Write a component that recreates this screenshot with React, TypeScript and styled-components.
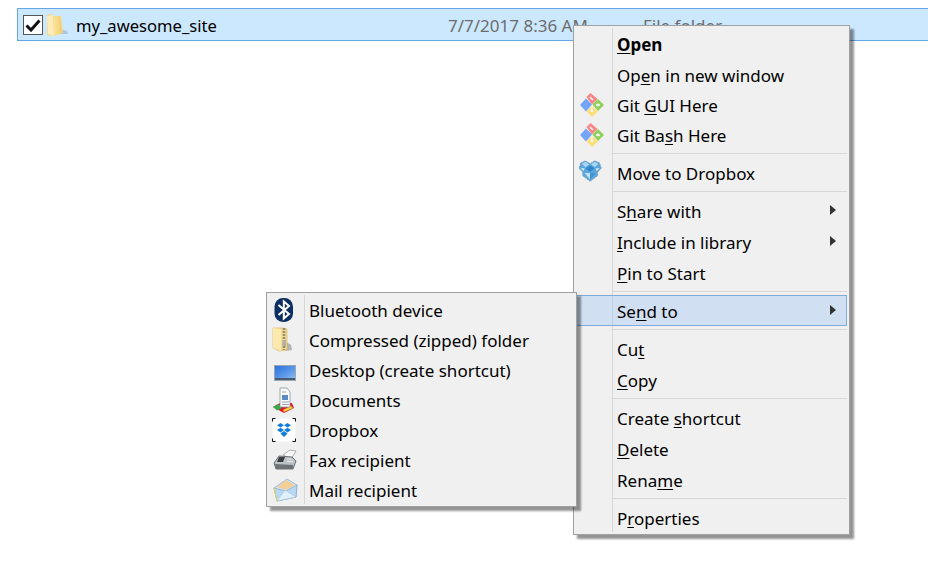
import React from 'react';
import styled, { createGlobalStyle } from 'styled-components';

const GlobalStyle = createGlobalStyle`
  html, body {
    margin: 0;
    padding: 0;
    background: #fff;
    overflow: hidden;
  }
  body {
    font-family: "Noto Sans", "Open Sans", "Liberation Sans", sans-serif;
    color: #000;
  }
`;

const Page = styled.div`
  position: relative;
  width: 928px;
  height: 568px;
  overflow: hidden;
  padding: 8px 0 0 17px;
  box-sizing: border-box;
`;

const FileRow = styled.div`
  display: flex;
  align-items: center;
  width: 930px;
  height: 33px;
  box-sizing: border-box;
  background: #cce8ff;
  border: 1px solid #66a7e8;
  padding-left: 5px;
  font-size: 17px;
`;

const CheckBox = styled.div`
  display: flex;
  align-items: center;
  justify-content: center;
  width: 20px;
  height: 20px;
  box-sizing: border-box;
  border: 1px solid #555;
  background: #fff;
  margin-right: 3px;
`;

const FileName = styled.span`
  margin-left: 6px;
  padding-top: 1px;
  width: 372px;
  font-size: 16.6px;
`;

const FileMeta = styled.span<{ $width: number }>`
  width: ${(p) => p.$width}px;
  padding-top: 1px;
  color: #6d6d6d;
  white-space: nowrap;
`;

const Menu = styled.div<{ $left: number; $top: number; $width: number; $gutter: number; $layer: number }>`
  position: absolute;
  left: ${(p) => p.$left}px;
  top: ${(p) => p.$top}px;
  width: ${(p) => p.$width}px;
  z-index: ${(p) => p.$layer};
  box-sizing: border-box;
  display: flex;
  flex-direction: column;
  padding: 2px 2px 1px;
  background: #f0f0f0;
  border: 1px solid #a0a0a0;
  box-shadow: 4px 4px 2px rgba(0, 0, 0, 0.42);

  &::before {
    content: '';
    position: absolute;
    left: ${(p) => p.$gutter}px;
    top: 2px;
    bottom: 2px;
    width: 1px;
    background: #d7d7d7;
  }
`;

const Row = styled.div<{ $height: number; $active?: boolean; $inset: number }>`
  position: relative;
  display: flex;
  align-items: center;
  height: ${(p) => p.$height}px;
  box-sizing: border-box;
  padding: 1px 0 0 ${(p) => p.$inset}px;
  font-size: 17px;
  white-space: nowrap;
  background: ${(p) => (p.$active ? 'rgba(160, 197, 245, 0.4)' : 'transparent')};
  outline: ${(p) => (p.$active ? '1px solid #7fabdc' : 'none')};
  outline-offset: -1px;
  u {
    text-underline-offset: 2px;
  }
`;

const Label = styled.span<{ $bold?: boolean }>`
  font-weight: ${(p) => (p.$bold ? 700 : 400)};
`;

const IconSlot = styled.span<{ $center: number }>`
  position: absolute;
  left: ${(p) => p.$center - 13}px;
  top: 50%;
  margin-top: -14px;
  width: 26px;
  height: 26px;
  display: flex;
  svg {
    overflow: visible;
  }
`;

const Arrow = styled.span`
  position: absolute;
  right: 11px;
  top: 10px;
  width: 0;
  height: 0;
  border-left: 6px solid #333;
  border-top: 5px solid transparent;
  border-bottom: 5px solid transparent;
`;

const Divider = styled.div`
  height: 1px;
  margin: 3px 0 3px 37px;
  background: #d7d7d7;
`;

const Tick = () => (
  <svg width="16" height="14" viewBox="0 0 16 14">
    <path d="M1.5 7.5 L6 12 L14.5 2.5" fill="none" stroke="#111" strokeWidth="3" />
  </svg>
);

const FolderIcon = () => (
  <svg width="24" height="24" viewBox="0 0 24 24" style={{ flex: 'none' }}>
    <defs>
      <linearGradient id="fld" x1="0" x2="1" y1="0" y2="0">
        <stop offset="0" stopColor="#fbe49c" />
        <stop offset="0.6" stopColor="#f6d67e" />
        <stop offset="1" stopColor="#eccb72" />
      </linearGradient>
    </defs>
    <path d="M13 21 L22 21 L21 18 L14 16 Z" fill="#9db4c8" opacity="0.65" />
    <path d="M1 2 L6 1 L7 3 L15 3 L17 20 L5 23 L1 22 Z" fill="#f3d888" />
    <path d="M8 4 L14 3 L16 20 L8 23 Z" fill="url(#fld)" />
    <path d="M1 3 L7 2 L8 23 L2 21 Z" fill="#fdecb8" />
  </svg>
);

const GitIcon = () => (
  <svg width="26" height="26" viewBox="0 -1 26 26">
    <path d="M7.5 5 L11.5 1 L18.5 7 L13 12.5 Z" fill="#fb8484" />
    <path d="M1 13 L7 6.5 L13 12.5 L7 19.5 Z" fill="#74a5fa" />
    <path d="M13.5 12.5 L19 7 L25 13 L19 19 Z" fill="#8ed05a" />
    <path d="M7.5 19.5 L13 13.5 L19 19.5 L13 25 Z" fill="#fddf78" />
    <path d="M11 5 L14 8 M13 14 V20 M17 13 H21" stroke="#f4f4f4" strokeWidth="1.6" />
    <circle cx="19" cy="13" r="1.4" fill="#f4f4f4" />
    <circle cx="13" cy="19" r="1.4" fill="#f4f4f4" />
  </svg>
);

const DropboxGem = () => (
  <svg width="26" height="26" viewBox="1 0 28 28">
    <path d="M3 4 L8 2 L13 5 L18 2 L23 4 L25 10 L21 14 L21 18 L13 24 L5 18 L5 14 L1 10 Z" fill="#5ba6dc" stroke="#7d9fb8" strokeWidth="1" strokeDasharray="2 1" />
    <path d="M4 5 L8 3 L12 6 L8 9 Z M22 5 L18 3 L14 6 L18 9 Z" fill="#a9d6f3" />
    <path d="M8 10 L13 7 L18 10 L13 14 Z" fill="#2f86cc" />
    <path d="M7 15 L13 15 L13 22 Z" fill="#bfe2f7" />
    <path d="M19 15 L13 15 L13 22 Z" fill="#3d94d6" />
    <path d="M3 10 L7 10 L6 13 Z M23 10 L19 10 L20 13 Z" fill="#d9eefa" />
  </svg>
);

const BluetoothIcon = () => (
  <svg width="26" height="26" viewBox="0 0 26 26">
    <rect x="1.5" y="2" width="18.5" height="24" rx="8.5" fill="#0c2f63" />
    <path d="M5.5 9 L16 18 L10.8 22.5 V5.5 L16 10 L5.5 19" fill="none" stroke="#fff" strokeWidth="2" />
  </svg>
);

const ZipIcon = () => (
  <svg width="26" height="26" viewBox="0 0 26 26">
    <path d="M13 25 L19 24 L18 19 L13 16 Z" fill="#9a9a9a" opacity="0.7" />
    <path d="M0 2 H10 L14 3 V24 L6 25 L0 22 Z" fill="#f6d98e" stroke="#d7b45c" strokeWidth="0.6" />
    <path d="M11 2 V24" stroke="#8e8e7c" strokeWidth="2.6" strokeDasharray="2 1" />
    <rect x="9.5" y="14" width="3.5" height="6" fill="#b0b0a4" />
    <path d="M0 2 L8 3 V25 L0 22 Z" fill="#fce9ad" />
  </svg>
);

const DesktopIcon = () => (
  <svg width="26" height="26" viewBox="0 0 26 26">
    <defs>
      <linearGradient id="dsk" x1="0" x2="1" y1="0" y2="1">
        <stop offset="0" stopColor="#2a6edb" />
        <stop offset="0.55" stopColor="#5a98ea" />
        <stop offset="1" stopColor="#9cc4f0" />
      </linearGradient>
    </defs>
    <rect x="1.5" y="9.5" width="21" height="15" fill="url(#dsk)" stroke="#9aa7b4" />
    <rect x="2" y="22" width="20" height="2" fill="#4a5a70" />
  </svg>
);

const DocumentsIcon = () => (
  <svg width="26" height="26" viewBox="1 0 26 26">
    <path d="M1 21 L8 17 L20 17 L22 22 L12 27 Z" fill="#e01a2e" />
    <path d="M1 21 L6 18 L10 22 L5 24.5 Z" fill="#3aa84a" />
    <path d="M12 26 L21 22 L19 20 L11 24 Z" fill="#f3d23a" />
    <path d="M8 2 H15 L18 6 V21 H8 Z" fill="#fbfbfb" stroke="#8b97a6" strokeWidth="0.8" />
    <rect x="10" y="9" width="6" height="5" fill="#5b8bc4" />
    <path d="M10 6 H14 M10 16 H17 M10 18.5 H17" stroke="#9aa5b2" />
  </svg>
);

const DropboxTile = () => (
  <svg width="26" height="26" viewBox="1 -2 26 26">
    <rect x="0.5" y="0.5" width="23" height="23" fill="#fff" />
    <path d="M0.5 3.5 V0.5 H3.5 M20.5 0.5 H23.5 V3.5 M23.5 20.5 V23.5 H20.5 M3.5 23.5 H0.5 V20.5" fill="none" stroke="#111" />
    <path d="M8.5 5 L12 7.3 L8.5 9.6 L5 7.3 Z M15.5 5 L19 7.3 L15.5 9.6 L12 7.3 Z M8.5 9.8 L12 12.1 L8.5 14.4 L5 12.1 Z M15.5 9.8 L19 12.1 L15.5 14.4 L12 12.1 Z M8.5 15.5 L12 13 L15.5 15.5 L12 19 Z" fill="#0f7ee0" />
  </svg>
);

const FaxIcon = () => (
  <svg width="26" height="26" viewBox="1 0 26 26">
    <path d="M11 9 L18 4 L24 5 L19 13 Z" fill="#fafafa" stroke="#8c8c8c" strokeWidth="0.7" />
    <path d="M2 17 L7 10 L20 11 L24 15 L21 23 L4 23 Z" fill="#bcc1c6" stroke="#4f5358" strokeWidth="0.8" />
    <path d="M3 18 L21 19 L21 23 L4 23 Z" fill="#6e7276" />
    <path d="M7 11 L13 11 L11 16 L5 16 Z" fill="#3a3d40" />
    <path d="M15 13 H20 M15 15.5 H21" stroke="#e8e8e8" strokeWidth="1" />
  </svg>
);

const MailIcon = () => (
  <svg width="26" height="26" viewBox="1 0 26 26">
    <path d="M2 12 L15 3 L25 9 L24 21 L5 25 Z" fill="#cfe4f8" stroke="#8aa8c8" strokeWidth="0.7" />
    <path d="M5 11 L14 4 L23 9 L14 14 Z" fill="#f2cf98" />
    <path d="M2 12 L14 15 L25 9 L24 21 L5 25 Z" fill="#b8d8f6" stroke="#8aa8c8" strokeWidth="0.7" />
    <path d="M5 25 L13 14 L24 21 Z" fill="#e2f0fc" stroke="#a5c2de" strokeWidth="0.6" />
    <path d="M2 12 L5 25" stroke="#e6d84a" />
  </svg>
);

type Entry = {
  label: React.ReactNode;
  height?: number;
  icon?: React.ReactNode;
  bold?: boolean;
  arrow?: boolean;
  active?: boolean;
  divided?: boolean;
};

const mainItems: Entry[] = [
  { label: <><u>O</u>pen</>, bold: true, height: 32 },
  { label: <>Op<u>e</u>n in new window</>, height: 30 },
  { label: <>Git <u>G</u>UI Here</>, icon: <GitIcon />, height: 30 },
  { label: <>Git Ba<u>s</u>h Here</>, icon: <GitIcon />, height: 30 },
  { label: 'Move to Dropbox', icon: <DropboxGem />, height: 31, divided: true },
  { label: <>S<u>h</u>are with</>, arrow: true, height: 31, divided: true },
  { label: <><u>I</u>nclude in library</>, arrow: true, height: 31 },
  { label: <><u>P</u>in to Start</>, height: 31 },
  { label: <>Se<u>n</u>d to</>, arrow: true, active: true, height: 31, divided: true },
  { label: <>Cu<u>t</u></>, height: 31, divided: true },
  { label: <><u>C</u>opy</>, height: 31 },
  { label: <>Create <u>s</u>hortcut</>, height: 31, divided: true },
  { label: <><u>D</u>elete</>, height: 31 },
  { label: <>Rena<u>m</u>e</>, height: 31 },
  { label: <>P<u>r</u>operties</>, height: 31, divided: true },
];

const sendToItems: Entry[] = [
  { label: 'Bluetooth device', icon: <BluetoothIcon /> },
  { label: 'Compressed (zipped) folder', icon: <ZipIcon /> },
  { label: 'Desktop (create shortcut)', icon: <DesktopIcon /> },
  { label: 'Documents', icon: <DocumentsIcon /> },
  { label: 'Dropbox', icon: <DropboxTile /> },
  { label: 'Fax recipient', icon: <FaxIcon /> },
  { label: 'Mail recipient', icon: <MailIcon /> },
];

export default function App() {
  return (
    <Page>
      <GlobalStyle />
      <FileRow>
        <CheckBox><Tick /></CheckBox>
        <FolderIcon />
        <FileName>my_awesome_site</FileName>
        <FileMeta $width={195}>7/7/2017 8:36 AM</FileMeta>
        <FileMeta $width={120}>File folder</FileMeta>
      </FileRow>

      <Menu $left={573} $top={25} $width={277} $gutter={38} $layer={1}>
        {mainItems.map((item, i) => (
          <React.Fragment key={i}>
            {item.divided && <Divider />}
            <Row $height={item.height ?? 30} $active={item.active} $inset={41}>
              {item.icon && <IconSlot $center={16}>{item.icon}</IconSlot>}
              <Label $bold={item.bold}>{item.label}</Label>
              {item.arrow && <Arrow />}
            </Row>
          </React.Fragment>
        ))}
      </Menu>

      <Menu $left={266} $top={292} $width={311} $gutter={37} $layer={2}>
        {sendToItems.map((item, i) => (
          <Row key={i} $height={30} $inset={40}>
            <IconSlot $center={17}>{item.icon}</IconSlot>
            <Label>{item.label}</Label>
          </Row>
        ))}
      </Menu>
    </Page>
  );
}
